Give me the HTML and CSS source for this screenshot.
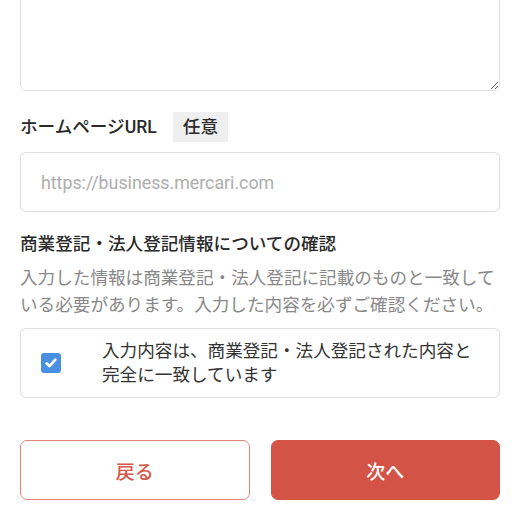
FILE: index.html
```html
<!DOCTYPE html>
<html lang="ja">
<head>
<meta charset="utf-8">
<link rel="stylesheet" href="styles.css">
</head>
<body>
<div class="page">
  <div class="field-top">
    <textarea class="textarea"></textarea>
  </div>
  <div class="label-row">
    <span class="label">ホームページURL</span>
    <span class="badge">任意</span>
  </div>
  <input class="input" type="text" placeholder="https://business.mercari.com">
  <h2 class="heading">商業登記・法人登記情報についての確認</h2>
  <p class="desc">入力した情報は商業登記・法人登記に記載のものと一致している必要があります。入力した内容を必ずご確認ください。</p>
  <label class="check-box">
    <span class="check-wrap">
      <span class="check">
        <svg width="14" height="14" viewBox="0 0 14 14"><path d="M2.6 7.3 L5.6 10.2 L11.4 3.7" fill="none" stroke="#fff" stroke-width="2.6" stroke-linecap="round" stroke-linejoin="round"/></svg>
      </span>
    </span>
    <span class="check-text">入力内容は、商業登記・法人登記された内容と完全に一致しています</span>
  </label>
  <div class="buttons">
    <button class="btn btn-back">戻る</button>
    <button class="btn btn-next">次へ</button>
  </div>
</div>
</body>
</html>
```
FILE: styles.css
```css
html, body {
  margin: 0;
  padding: 0;
  background: #fff;
}
body {
  font-family: Roboto, "Noto Sans CJK JP", sans-serif;
  font-size: 17.6px;
  color: #333;
}
.page {
  padding: 0 20px;
  display: flex;
  flex-direction: column;
}
.field-top {
  margin-top: -10px;
}
.textarea {
  display: block;
  box-sizing: border-box;
  width: 100%;
  height: 101px;
  border: 1px solid #dedede;
  border-radius: 6px;
  margin: 0;
  font: inherit;
}
.label-row {
  margin-top: 21px;
  display: flex;
  align-items: center;
  height: 30px;
}
.label {
  font-weight: 500;
  line-height: 26px;
  color: #2a2a2a;
}
.badge {
  margin-left: 16px;
  height: 30px;
  line-height: 30px;
  padding: 0 10px;
  background: #efefef;
  font-weight: 500;
  color: #2a2a2a;
}
.input {
  margin-top: 10px;
  box-sizing: border-box;
  width: 100%;
  height: 60px;
  border: 1px solid #dedede;
  border-radius: 6px;
  padding: 0 20px;
  font: inherit;
  font-size: 17.8px;
  color: #333;
}
.input::placeholder {
  color: #adadad;
}
.heading {
  margin: 19px 0 0;
  font-size: 17.6px;
  font-weight: 500;
  line-height: 26px;
  color: #2a2a2a;
}
.desc {
  margin: 8px 0 0;
  color: #888;
  line-height: 26.5px;
}
.check-box {
  margin-top: 10px;
  display: flex;
  align-items: center;
  border: 1px solid #dedede;
  border-radius: 6px;
  padding: 10px 19px 10px 20px;
  line-height: 24px;
}
.check-wrap {
  flex: 0 0 61px;
  display: flex;
  align-items: center;
}
.check {
  width: 20px;
  height: 20px;
  border-radius: 3px;
  background: #4a90e2;
  display: flex;
  align-items: center;
  justify-content: center;
}
.check svg {
  display: block;
}
.check-text {
  flex: 1;
}
.buttons {
  margin-top: 42px;
  display: grid;
  grid-template-columns: 1fr 1fr;
  gap: 21px;
}
.btn {
  height: 60px;
  border-radius: 7px;
  font: inherit;
  font-size: 19px;
  font-weight: 500;
  box-sizing: border-box;
  margin: 0;
}
.btn-back {
  background: #fff;
  border: 1.5px solid #e3847b;
  color: #d4574a;
}
.btn-next {
  background: #d35446;
  border: 1px solid #d35446;
  color: #fff;
}
```
